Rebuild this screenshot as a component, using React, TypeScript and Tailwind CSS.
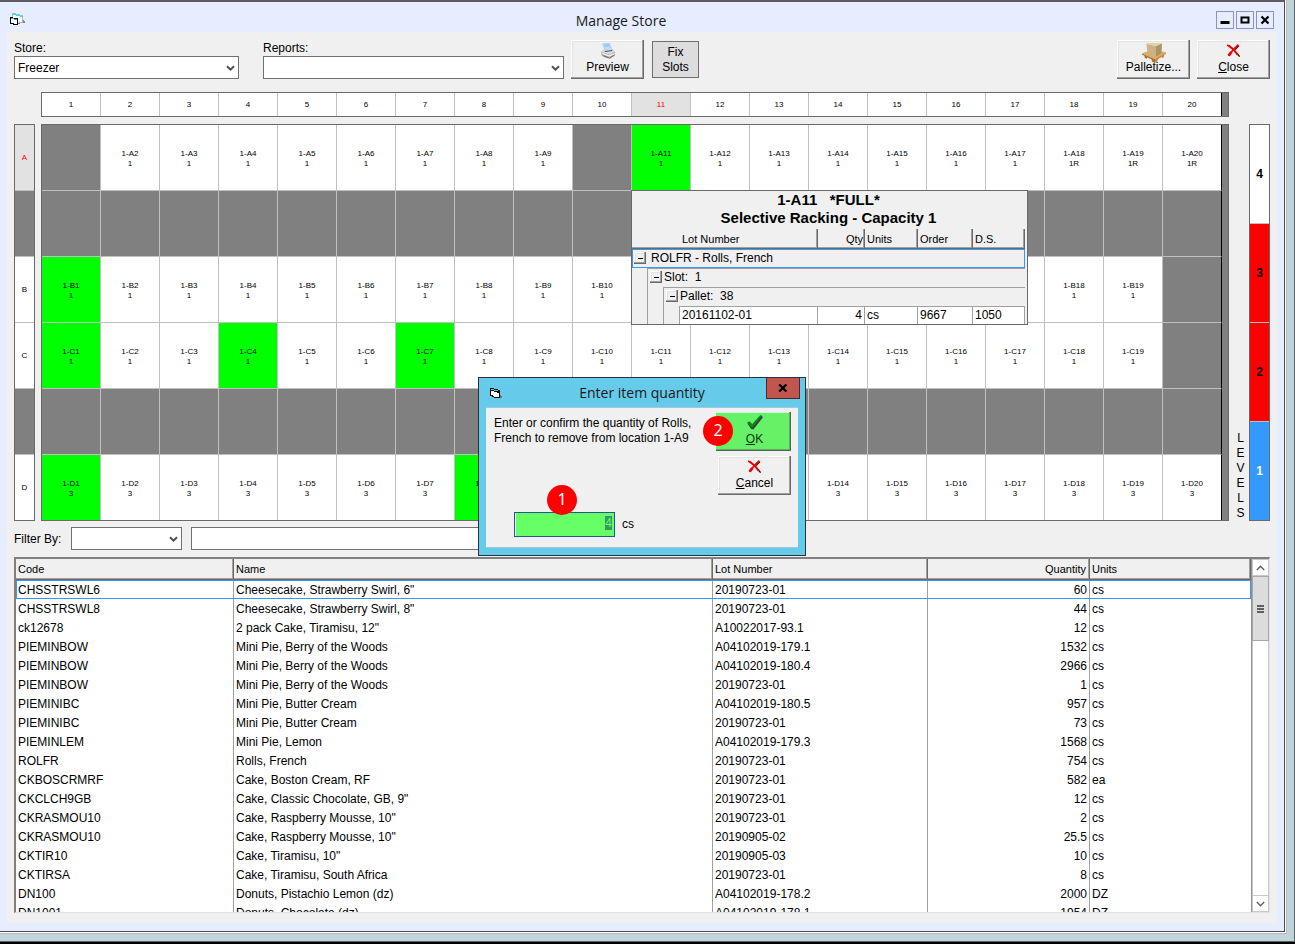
import { useEffect, useRef } from "react";
import type { ReactNode } from "react";

const BEVEL =
  "bg-[#f0f0f0] shadow-[inset_-1px_-1px_0_#696969,inset_-2px_-2px_0_#a0a0a0,inset_1px_1px_0_#ffffff,inset_2px_2px_0_#e3e3e3]";
const HEAD =
  "bg-[#f0f0f0] shadow-[inset_-1px_-1px_0_#696969,inset_-2px_-2px_0_#a0a0a0]";

type Cell = { label: string; note: string; tone: "open" | "full" | "void" };

const COLUMNS = Array.from({ length: 20 }, (_, i) => i + 1);
const ROWS: { name: string; note: string; full: number[]; empty: number[] }[] = [
  { name: "A", note: "1", full: [11], empty: [1, 10] },
  { name: "", note: "", full: [], empty: COLUMNS },
  { name: "B", note: "1", full: [1], empty: [20] },
  { name: "C", note: "1", full: [1, 4, 7], empty: [20] },
  { name: "", note: "", full: [], empty: COLUMNS },
  { name: "D", note: "3", full: [1, 8], empty: [] },
];

const CELLS: Cell[] = ROWS.flatMap((row) =>
  COLUMNS.map((col): Cell => {
    if (row.empty.includes(col)) return { label: "", note: "", tone: "void" };
    return {
      label: `1-${row.name}${col}`,
      note: row.name === "A" && col >= 18 ? "1R" : row.note,
      tone: row.full.includes(col) ? "full" : "open",
    };
  })
);

const TONES = { open: "bg-white", full: "bg-[#00ff00]", void: "bg-[#808080]" };

const ITEMS = [
  ["CHSSTRSWL6", 'Cheesecake, Strawberry Swirl, 6"', "20190723-01", "60", "cs"],
  ["CHSSTRSWL8", 'Cheesecake, Strawberry Swirl, 8"', "20190723-01", "44", "cs"],
  ["ck12678", '2 pack Cake, Tiramisu, 12"', "A10022017-93.1", "12", "cs"],
  ["PIEMINBOW", "Mini Pie, Berry of the Woods", "A04102019-179.1", "1532", "cs"],
  ["PIEMINBOW", "Mini Pie, Berry of the Woods", "A04102019-180.4", "2966", "cs"],
  ["PIEMINBOW", "Mini Pie, Berry of the Woods", "20190723-01", "1", "cs"],
  ["PIEMINIBC", "Mini Pie, Butter Cream", "A04102019-180.5", "957", "cs"],
  ["PIEMINIBC", "Mini Pie, Butter Cream", "20190723-01", "73", "cs"],
  ["PIEMINLEM", "Mini Pie, Lemon", "A04102019-179.3", "1568", "cs"],
  ["ROLFR", "Rolls, French", "20190723-01", "754", "cs"],
  ["CKBOSCRMRF", "Cake, Boston Cream, RF", "20190723-01", "582", "ea"],
  ["CKCLCH9GB", 'Cake, Classic Chocolate, GB, 9"', "20190723-01", "12", "cs"],
  ["CKRASMOU10", 'Cake, Raspberry Mousse, 10"', "20190723-01", "2", "cs"],
  ["CKRASMOU10", 'Cake, Raspberry Mousse, 10"', "20190905-02", "25.5", "cs"],
  ["CKTIR10", 'Cake, Tiramisu, 10"', "20190905-03", "10", "cs"],
  ["CKTIRSA", "Cake, Tiramisu, South Africa", "20190723-01", "8", "cs"],
  ["DN100", "Donuts, Pistachio Lemon (dz)", "A04102019-178.2", "2000", "DZ"],
  ["DN1001", "Donuts, Chocolate (dz)", "A04102019-178.1", "1954", "DZ"],
];

function FormsIcon() {
  return (
    <svg width="16" height="13" viewBox="0 0 16 13" shapeRendering="crispEdges" aria-hidden="true">
      <path d="M2 0h4v1h4v1h3v7h-3V8H2z" fill="#fff" />
      <path d="M2 0h4v1H2zM2 0h1v4H2zM6 1h4v1H6zM10 2h3v1h-3zM12 3h1v6h-1zM9 9h4v1H9z" fill="#b5b5b5" />
      <path d="M3 1h3v1H3zM6 2h4v1H6zM10 3h2v1h-2z" fill="#19e6f0" />
      <path d="M13 7h1v1h1v2h-2zM8 10h2v1H8z" fill="#808080" />
      <path d="M0 4h3v1h5v7H3v-1H0z" fill="#000" />
      <path d="M1 6h3v1h3v4H4v-1H1z" fill="#fff" />
      <path d="M1 5h3v1H1zM4 6h3v1H4z" fill="#16b9c4" />
    </svg>
  );
}

function FormIcon() {
  return (
    <svg width="13" height="11" viewBox="0 0 13 11" shapeRendering="crispEdges" aria-hidden="true">
      <path d="M0 0h4v1h4v1h2v8H4V9H2V8H0z" fill="#000" />
      <path d="M1 3h3v1h3v1h2v4H4V8H3V7H1z" fill="#fff" />
      <path d="M1 1h3v1H1zM4 2h4v1H4z" fill="#19e6f0" />
      <path d="M10 7h1v1h1v2h-2z" fill="#707070" />
    </svg>
  );
}

function PrinterIcon() {
  return (
    <svg width="16" height="16" viewBox="0 0 16 16" aria-hidden="true">
      <path d="M1.200 9 4 6.500 12.500 6.200 15 9v3.500l-4.500 3L6 15l-4.500-2.500z" fill="#a9a9a9" />
      <path d="M1.200 9 4 6.500l8.500-.3L15 9l-5.500 2.500z" fill="#dadada" />
      <path d="M2.500.9 9.500.2 12 7.300 5.500 8.200z" fill="#c3dbfa" stroke="#9dbdea" strokeWidth=".6" />
      <path d="M4 1.600 8.800 1l.8 2.400-4.600.6z" fill="#9cc2f5" />
      <path d="M4.800 8.600 12.200 7.500" stroke="#555" strokeWidth="1" />
      <path d="M2.200 10.400 9.300 13l5.200-2.600" stroke="#f6f6f6" strokeWidth="1.200" fill="none" />
      <path d="M3 12.600 9.400 15l4.800-2.800" stroke="#747474" strokeWidth="1" fill="none" />
      <circle cx="13.200" cy="10" r=".7" fill="#e0a458" />
    </svg>
  );
}

function PalletIcon() {
  return (
    <svg width="24" height="20" viewBox="0 0 24 20" className="shrink-0" aria-hidden="true">
      <path d="M0 10.500 6 8h13l5 1.500-10.500 7z" fill="#dcae6c" />
      <path d="M0 10.500 13 16.300v3.500L9.800 18.500v-2L5 14.300v1.600L2.500 14.600v-1.800L0 11.800z" fill="#a8702f" />
      <path d="M24 9.500 13 16.300v3.500l2.600-1.600v-1.800l4.200-2.600v1.500l2.200-1.400V12l2-1.200z" fill="#c68639" />
      <path d="M4.500.8 14 3v11L5.500 10.600z" fill="#cbb384" />
      <path d="M20 .6 14 3v11l5.500-3.800z" fill="#ad9467" />
      <path d="M4.500.8 7 0h11l2 .6L14 3z" fill="#e3d1a8" />
    </svg>
  );
}

function RedCrossIcon() {
  return (
    <svg width="15" height="15" viewBox="0 0 15 15" aria-hidden="true">
      <path d="M3 2.400C6.500 5 10.500 9 13.600 13.600M12.800 2.800 9 6.600" stroke="#300000" strokeWidth="1.300" fill="none" />
      <path d="M1.200 2c3.800 2 7.600 5.800 10.600 10" stroke="#f00000" strokeWidth="1.900" fill="none" />
      <path d="M12.400 1.600C8.600 4.800 5.400 8.400 2.600 12.600" stroke="#f00000" strokeWidth="1.700" fill="none" />
      <path d="M5.400 9 2.600 12.600" stroke="#f00000" strokeWidth="2.800" fill="none" />
    </svg>
  );
}

function CheckIcon() {
  return (
    <svg width="17" height="15" viewBox="0 0 17 15" aria-hidden="true">
      <path d="M1.400 8.600 3.800 7.400 6.400 10 14.400.8l2.200.6v1.400L7.400 14.400 5.200 14z" fill="#33443a" />
      <path d="M1 7.400 3.600 6.200 6.200 9 14.200.2h1.800L6.200 12.800z" fill="#0c8a1c" />
    </svg>
  );
}

function Chevron() {
  return (
    <svg width="9" height="7" viewBox="0 0 9 7" aria-hidden="true" className="pointer-events-none absolute right-1 top-[9px]">
      <path d="M1 1.200 4.500 4.700 8 1.200" fill="none" stroke="#505050" strokeWidth="2" />
    </svg>
  );
}

function Dropdown({ id, value, className }: { id: string; value: string; className: string }) {
  return (
    <div className={`relative h-[23px] ${className}`}>
      <select
        id={id}
        aria-label={id}
        defaultValue={value}
        className="h-full w-full appearance-none rounded-none border border-[#707070] bg-white pl-[3px] pr-4 text-xs leading-4 outline-none"
      >
        <option>{value}</option>
      </select>
      <Chevron />
    </div>
  );
}

function ToolButton({ icon, children }: { icon: ReactNode; children: ReactNode }) {
  return (
    <button type="button" className={`flex h-[39px] w-[73px] flex-col items-center pt-[3px] ${BEVEL}`}>
      <span className="flex h-4 items-start justify-center">{icon}</span>
      <span className="relative leading-[17px]">{children}</span>
    </button>
  );
}

function CaptionButton({ label, children }: { label: string; children: ReactNode }) {
  return (
    <button type="button" aria-label={label} className="flex size-[18px] items-center justify-center border border-[#8a94b8]">
      <svg width="16" height="16" viewBox="0 0 16 16" aria-hidden="true">
        {children}
      </svg>
    </button>
  );
}

function Expander() {
  return (
    <button type="button" aria-label="Collapse" className={`flex size-3 shrink-0 items-center justify-center ${BEVEL}`}>
      <span className="h-px w-[5px] bg-black" />
    </button>
  );
}

function SlotPopup() {
  return (
    <div className="absolute left-[589px] top-[65px] z-10 h-[135px] w-[397px] overflow-hidden border border-[#696969] bg-[#f0f0f0] pr-0.5">
      <div className="pb-0.5 text-center text-[15px] font-bold leading-[18px]">
        <div className="whitespace-pre">1-A11   *FULL*</div>
        <div>Selective Racking - Capacity 1</div>
      </div>
      <table className="w-full table-fixed border-separate border-spacing-0">
        <colgroup>
          <col />
          <col className="w-[47px]" />
          <col className="w-[53px]" />
          <col className="w-[55px]" />
          <col className="w-[52px]" />
        </colgroup>
        <thead>
          <tr className="h-5 text-left text-[11px] leading-4 [&>th]:p-0 [&>th]:pl-0.5 [&>th]:font-normal">
            <th className={HEAD}><span className="pl-12">Lot Number</span></th>
            <th className={`text-right ${HEAD}`}><span className="pr-0.5">Qty</span></th>
            <th className={HEAD}>Units</th>
            <th className={HEAD}>Order</th>
            <th className={HEAD}>D.S.</th>
          </tr>
        </thead>
        <tbody className="[&_td]:p-0">
          <tr className="h-[19px]">
            <td colSpan={5}>
              <div className="flex h-[19px] items-center gap-[5px] border border-[#3399ff] pb-px pl-px">
                <Expander />
                ROLFR - Rolls, French
              </div>
            </td>
          </tr>
          <tr className="h-[19px]">
            <td colSpan={5}>
              <div className="flex h-[19px] pl-[15px]">
                <div className="flex flex-1 items-center gap-0.5 whitespace-pre border-l border-t border-[#a0a0a0] pb-0.5 pl-0.5">
                  <Expander />
                  {"Slot:  1"}
                </div>
              </div>
            </td>
          </tr>
          <tr className="h-[19px]">
            <td colSpan={5}>
              <div className="flex h-[19px] pl-[15px]">
                <div className="w-4 border-l border-[#a0a0a0]" />
                <div className="flex flex-1 items-center gap-0.5 whitespace-pre border-l border-t border-[#a0a0a0] pb-0.5 pl-0.5">
                  <Expander />
                  {"Pallet:  38"}
                </div>
              </div>
            </td>
          </tr>
          <tr className="h-[19px] leading-4 [&>td+td]:border-t [&>td]:border-r [&>td]:border-[#a0a0a0]">
            <td>
              <div className="flex h-[19px] pl-[15px]">
                <div className="w-4 border-l border-[#a0a0a0]" />
                <div className="w-4 border-l border-[#a0a0a0]" />
                <div className="flex-1 border-l border-t border-[#a0a0a0] bg-white pl-0.5">20161102-01</div>
              </div>
            </td>
            <td className="bg-white text-right align-top"><span className="pr-0.5">4</span></td>
            <td className="bg-white align-top"><span className="pl-0.5">cs</span></td>
            <td className="bg-white align-top"><span className="pl-0.5">9667</span></td>
            <td className="bg-white align-top"><span className="pl-0.5">1050</span></td>
          </tr>
        </tbody>
      </table>
    </div>
  );
}

function Badge({ className, children }: { className: string; children: ReactNode }) {
  return (
    <span
      className={`absolute flex size-[30px] items-center justify-center rounded-full bg-[#ff0000] pb-0.5 font-['Noto_Sans',sans-serif] text-base leading-none text-white ${className}`}
    >
      {children}
    </span>
  );
}

function QuantityDialog() {
  const field = useRef<HTMLInputElement>(null);
  useEffect(() => {
    field.current?.focus();
    field.current?.select();
  }, []);
  return (
    <div
      role="dialog"
      aria-labelledby="dialog-title"
      className="absolute left-[478px] top-[375px] z-20 flex h-[179px] w-[328px] flex-col border border-[#26333a] bg-[#66caea] px-[7px] pb-[7px]"
    >
      <div className="flex h-[29px] items-start">
        <span className="w-8 pl-1 pt-2.5"><FormIcon /></span>
        <h2 id="dialog-title" className="flex-1 pt-1.5 text-center font-['Open_Sans',sans-serif] text-sm leading-[18px] text-[#1a1a1a]">
          Enter item quantity
        </h2>
        <button type="button" aria-label="Close dialog" className="-mr-0.5 flex h-[21px] w-[34px] items-center justify-center border border-t-0 border-[#4a2a2a] bg-[#c0564e]">
          <svg width="10" height="8" viewBox="0 0 10 8" aria-hidden="true">
            <path d="M1.200.4 8.400 7.600M8.400.4 1.200 7.600" stroke="#000" strokeWidth="2.200" />
          </svg>
        </button>
      </div>
      <div className="relative flex flex-1 justify-between border-y border-[#9cc8da] bg-[#f0f0f0] pl-2 pr-[7px] pt-1">
        <div>
          <p className="whitespace-nowrap pt-1 leading-[15px]">
            Enter or confirm the quantity of Rolls,
            <br />
            French to remove from location 1-A9
          </p>
          <div className="flex items-center gap-[7px] pl-5 pt-[66px]">
            <input
              ref={field}
              id="quantity"
              defaultValue="4"
              className="h-[25px] w-[101px] rounded-none border border-[#1f5a96] bg-[#66ff66] pb-1 pl-1 pr-0.5 text-right text-xs text-black caret-transparent shadow-[inset_1px_0_0_#f0f0f0] outline-none selection:bg-[#339966]/99 selection:text-[#66ff66]"
            />
            <label htmlFor="quantity" className="pb-0.5">cs</label>
          </div>
        </div>
        <div className="flex flex-col items-end gap-[5px]">
          <button
            type="button"
            className="flex h-[39px] w-[75px] flex-col items-center bg-[#66f266] pl-0.5 pt-[3px] shadow-[inset_-1px_-1px_0_#4d6b4d,inset_-2px_-2px_0_#66a866,inset_0_1px_0_#d8f8d8]"
          >
            <span className="h-4"><CheckIcon /></span>
            <span className="leading-[17px] text-[#143214]"><u>O</u>K</span>
          </button>
          <ToolButton icon={<RedCrossIcon />}><u>C</u>ancel</ToolButton>
        </div>
        <Badge className="left-[217px] top-2">2</Badge>
        <Badge className="left-[61px] top-[77px]">1</Badge>
      </div>
    </div>
  );
}

function RackMap() {
  return (
    <>
      <div className="ml-[27px] mr-[41px] flex h-[25px] border border-[#696969] bg-[#808080] pr-1.5">
        <div className="grid flex-1 grid-cols-20 text-[8px]">
          {COLUMNS.map((col) => (
            <div
              key={col}
              className={`flex items-center justify-center border-r pt-0.5 ${col === 20 ? "border-black" : "border-[#c0c0c0]"} ${
                col === 11 ? "bg-[#e2e2e2] text-[#ff0000]" : "bg-white"
              }`}
            >
              {col}
            </div>
          ))}
        </div>
      </div>

      <div className="mt-[7px] flex h-[397px] shrink-0">
        <div className="mr-1.5 grid w-[21px] grid-rows-[repeat(5,66fr)_65fr] border border-[#696969] text-[8px]">
          {ROWS.map((row, i) => (
            <div
              key={i}
              className={`flex items-center justify-center border-[#c0c0c0] pt-0.5 ${i < 5 ? "border-b" : ""} ${
                row.name === "A" ? "bg-[#e2e2e2] text-[#ff0000]" : row.name ? "bg-white" : "bg-[#808080]"
              }`}
            >
              {row.name}
            </div>
          ))}
        </div>

        <div className="relative flex flex-1 border border-[#696969] bg-[#808080] pr-1.5">
          <div className="grid flex-1 grid-cols-20 grid-rows-[repeat(5,66fr)_65fr] text-[8px] leading-[10px]">
            {CELLS.map((cell, i) => (
              <div
                key={i}
                className={`flex flex-col items-center justify-center border-r pt-[3px] ${i % 20 === 19 ? "border-r-black" : "border-r-[#c0c0c0]"} ${
                  i < 100 ? "border-b border-b-[#c0c0c0]" : ""
                } ${TONES[cell.tone]}`}
              >
                <span>{cell.label}</span>
                <span>{cell.note}</span>
              </div>
            ))}
          </div>
          <SlotPopup />
        </div>

        <div className="flex w-5 flex-col items-center justify-end pl-[3px] leading-[15px]">
          {["L", "E", "V", "E", "L", "S"].map((letter, i) => (
            <span key={i}>{letter}</span>
          ))}
        </div>

        <div className="grid w-[21px] grid-rows-[repeat(3,99fr)_98fr] border border-[#696969] font-bold">
          <button type="button" className="border-b border-[#c0c0c0] bg-white font-bold">4</button>
          <button type="button" className="border-b border-[#c0c0c0] bg-[#ff0000] font-bold">3</button>
          <button type="button" className="border-b border-[#c0c0c0] bg-[#ff0000] font-bold">2</button>
          <button type="button" className="bg-[#3399ff] font-bold text-white">1</button>
        </div>
      </div>
    </>
  );
}

function ItemTable() {
  return (
    <div className="mt-[7px] flex min-h-0 flex-1 border-b border-l-2 border-r border-t-2 border-b-[#e3e3e3] border-l-[#808080] border-r-[#e3e3e3] border-t-[#808080] bg-white">
      <div className="min-w-0 flex-1 overflow-hidden">
        <table className="w-full table-fixed border-separate border-spacing-0 text-left">
          <colgroup>
            <col className="w-[218px]" />
            <col />
            <col className="w-[215px]" />
            <col className="w-[162px]" />
            <col className="w-[161px]" />
          </colgroup>
          <thead>
            <tr className="h-[21px] text-[11px] leading-4 [&>th]:px-0.5 [&>th]:pb-0.5 [&>th]:pt-0 [&>th]:font-normal">
              <th className={HEAD}>Code</th>
              <th className={HEAD}>Name</th>
              <th className={HEAD}>Lot Number</th>
              <th className={`text-right ${HEAD}`}><span className="pr-0.5">Quantity</span></th>
              <th className={HEAD}>Units</th>
            </tr>
          </thead>
          <tbody>
            {ITEMS.map((item, r) => (
              <tr
                key={r}
                className={`h-[19px] leading-4 ${r === 0 ? "outline outline-1 -outline-offset-1 outline-[#3399ff]" : ""}`}
              >
                {item.map((value, c) => (
                  <td
                    key={c}
                    className={`whitespace-nowrap px-0.5 py-0 ${c < 4 ? "border-r border-[#a0a0a0]" : ""} ${c === 3 ? "text-right" : ""}`}
                  >
                    {value}
                  </td>
                ))}
              </tr>
            ))}
          </tbody>
        </table>
      </div>
      <div className="flex w-[18px] flex-col border-l border-[#909090] bg-white">
        <button type="button" aria-label="Scroll up" className="flex h-[17px] items-center justify-center border border-[#c8c8c8]">
          <svg width="9" height="6" viewBox="0 0 9 6" aria-hidden="true"><path d="M.8 5 4.500 1.300 8.200 5" fill="none" stroke="#606060" strokeWidth="1.400" /></svg>
        </button>
        <div className="flex-1 border-x border-[#c8c8c8]">
          <div className="-mx-px flex h-[65px] flex-col items-center justify-center gap-px border border-[#a6a6a6] bg-[#dcdcdc]">
            <span className="h-0.5 w-[7px] bg-[#606060]" />
            <span className="h-0.5 w-[7px] bg-[#606060]" />
            <span className="h-0.5 w-[7px] bg-[#606060]" />
          </div>
        </div>
        <button type="button" aria-label="Scroll down" className="flex h-[17px] items-center justify-center border border-[#c8c8c8]">
          <svg width="9" height="6" viewBox="0 0 9 6" aria-hidden="true"><path d="M.8 1 4.500 4.700 8.200 1" fill="none" stroke="#606060" strokeWidth="1.400" /></svg>
        </button>
      </div>
    </div>
  );
}

export default function App() {
  return (
    <div className="h-screen bg-black pb-0.5 font-['Liberation_Sans',Arial,sans-serif] text-xs text-black">
      <div className="h-full border-b border-r border-[#56616a] bg-[#c1d4da] pb-[7px] pr-[7px]">
        <div className="h-full border-b border-r border-[#b4bcc0] bg-white pb-px pr-px">
          <div className="relative flex h-full flex-col border-b border-r border-t-2 border-[#4a4a52] border-t-[#5f5b5e] bg-[#e6edfe] px-[7px] pb-2">
            <header className="flex h-[30px] shrink-0 items-center pl-[3px] pr-[3px]">
              <span className="w-4 pt-1"><FormsIcon /></span>
              <h1 className="flex-1 pt-2 text-center font-['Open_Sans',sans-serif] text-sm leading-[18px] text-[#1a1a1a]">Manage Store</h1>
              <div className="flex gap-0.5 pt-1.5">
                <CaptionButton label="Minimize"><path d="M3.500 9h9v3h-9z" /></CaptionButton>
                <CaptionButton label="Maximize"><path d="M4.500 5.500h7v5h-7z" fill="none" stroke="#000" strokeWidth="2" /></CaptionButton>
                <CaptionButton label="Close window"><path d="M4.500 4.500l7 7M11.500 4.500l-7 7" stroke="#000" strokeWidth="2.200" /></CaptionButton>
              </div>
            </header>

            <main className="flex min-h-0 flex-1 flex-col bg-[#f0f0f0] px-[7px] pb-2.5">
              <div className="flex h-[60px] shrink-0 items-start justify-between pt-2">
                <div className="flex items-center">
                  <div className="mr-6">
                    <label htmlFor="Store" className="block leading-4">Store:</label>
                    <Dropdown id="Store" value="Freezer" className="w-[225px]" />
                  </div>
                  <div className="mr-[7px]">
                    <label htmlFor="Reports" className="block leading-4">Reports:</label>
                    <Dropdown id="Reports" value="" className="w-[301px]" />
                  </div>
                  <ToolButton icon={<PrinterIcon />}>Preview</ToolButton>
                  <button type="button" className="ml-2 h-[37px] w-[47px] border border-[#707070] bg-[#dddddd] leading-[15px]">
                    Fix
                    <br />
                    Slots
                  </button>
                </div>
                <div className="flex gap-[7px]">
                  <ToolButton icon={<PalletIcon />}>Palletize...</ToolButton>
                  <ToolButton icon={<RedCrossIcon />}><u>C</u>lose</ToolButton>
                </div>
              </div>

              <RackMap />

              <div className="mt-1.5 flex shrink-0 items-center">
                <label htmlFor="Filter" className="w-[57px]">Filter By:</label>
                <Dropdown id="Filter" value="" className="w-[111px]" />
                <input aria-label="Filter text" className="ml-[9px] h-[23px] w-[450px] rounded-none border border-[#707070] bg-white px-1 outline-none" />
              </div>

              <ItemTable />
            </main>

            <QuantityDialog />
          </div>
        </div>
      </div>
    </div>
  );
}
